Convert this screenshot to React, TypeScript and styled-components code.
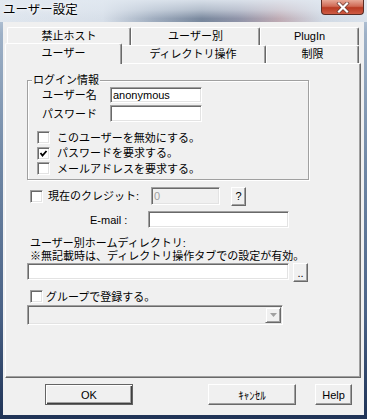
import React from 'react';
import styled, { createGlobalStyle, css } from 'styled-components';

const FONT = `"Liberation Sans", "Noto Sans CJK JP", sans-serif`;

const GlobalStyle = createGlobalStyle`
  html, body {
    margin: 0;
    padding: 0;
  }
  body {
    font-family: ${FONT};
    font-size: 11px;
    color: #000;
  }
`;

const Window = styled.div`
  width: 367px;
  height: 419px;
  box-sizing: border-box;
  display: flex;
  flex-direction: column;
  padding: 0 3px 4px 3px;
  overflow: hidden;
  background: linear-gradient(180deg, #c9d6e4 0%, #9eb1c7 8%, #6f87a5 40%, #4a6286 75%, #1f3356 100%);
`;

const TitleBar = styled.div`
  height: 22px;
  margin: 0 -3px;
  padding: 0 3px;
  display: flex;
  justify-content: space-between;
  align-items: flex-start;
  background:
    linear-gradient(180deg, rgba(226, 233, 241, 0.9) 0%, rgba(226, 233, 241, 0.6) 45%, rgba(226, 233, 241, 0.1) 85%),
    linear-gradient(90deg, #dfe6ee 0%, #d6dee8 28%, #98a6b9 42%, #6c7c93 55%, #868aa0 65%, #bba4ad 76%, #cfd8e3 88%, #d8e1eb 100%);
`;

const Title = styled.div`
  font-family: ${FONT};
  font-size: 12.5px;
  line-height: 20px;
  color: #000;
  text-shadow: 0 0 6px #fff, 0 0 3px #fff;
`;

const CloseButton = styled.div`
  width: 43px;
  height: 15px;
  box-sizing: border-box;
  border: 1px solid #5b2c24;
  border-top: none;
  border-radius: 0 0 4px 4px;
  background: linear-gradient(180deg, #e7a896 0%, #d06a55 45%, #b93a22 55%, #cf5c45 100%);
  display: flex;
  align-items: center;
  justify-content: center;
`;

const Client = styled.div`
  flex: 1;
  background: #f0f0f0;
  display: flex;
  flex-direction: column;
  padding: 5px 3px 0 2px;
`;

const TabControl = styled.div`
  width: 356px;
  display: flex;
  flex-direction: column;
`;

const TabRow = styled.div`
  display: flex;
  height: 18px;
  padding-left: 2px;
`;

const Tab = styled.div<{ $w: number; $active?: boolean }>`
  box-sizing: border-box;
  width: ${(p) => p.$w}px;
  height: 18px;
  border: 1px solid #fff;
  border-right-color: #696969;
  border-bottom: none;
  border-radius: 2px 2px 0 0;
  box-shadow: inset -1px 0 0 #a0a0a0;
  background: #f0f0f0;
  text-align: center;
  line-height: 16px;
  font-family: ${FONT};
  font-size: 11px;
  white-space: nowrap;
  ${(p) =>
    p.$active &&
    css`
      position: relative;
      z-index: 1;
      height: 21px;
      margin: -2px -2px -1px -2px;
      line-height: 18px;
    `}
`;

const Panel = styled.div`
  box-sizing: border-box;
  height: 315px;
  border: 1px solid #fff;
  border-right-color: #696969;
  border-bottom-color: #696969;
  box-shadow: inset -1px -1px 0 #a0a0a0;
  padding: 16px 0 0 21px;
  display: flex;
  flex-direction: column;
  align-items: flex-start;
`;

const GroupBox = styled.div`
  position: relative;
  box-sizing: border-box;
  width: 282px;
  height: 100px;
  border: 1px solid #a0a0a0;
  box-shadow: inset 1px 1px 0 #fff, 1px 1px 0 #fff;
  padding: 6px 0 0 9px;
  display: flex;
  flex-direction: column;
`;

const Legend = styled.span`
  position: absolute;
  top: -8px;
  left: 4px;
  padding: 0 1px;
  background: #f0f0f0;
  line-height: 14px;
`;

const FieldRow = styled.div<{ $gap?: number }>`
  display: flex;
  align-items: center;
  padding-left: 5px;
  margin-top: ${(p) => p.$gap ?? 0}px;
`;

const FieldLabel = styled.span<{ $w: number; $pad?: number }>`
  width: ${(p) => p.$w}px;
  padding-left: ${(p) => p.$pad ?? 0}px;
  box-sizing: border-box;
  line-height: 14px;
  white-space: nowrap;
`;

const TextBox = styled.input<{ $w: number; $h?: number }>`
  box-sizing: border-box;
  width: ${(p) => p.$w}px;
  height: ${(p) => p.$h ?? 17}px;
  margin: 0;
  padding: 0 2px;
  border: 1px solid;
  border-color: #a0a0a0 #fff #fff #a0a0a0;
  box-shadow: inset 1px 1px 0 #696969, inset -1px -1px 0 #e3e3e3;
  background: #fff;
  font-family: ${FONT};
  font-size: 11px;
  color: #000;
  outline: none;
  &:disabled {
    background: #f0f0f0;
    color: #a0a0a0;
  }
`;

const CheckRow = styled.label<{ $h?: number; $gap?: number; $indent?: number; $top?: number }>`
  display: flex;
  align-items: center;
  height: ${(p) => p.$h ?? 15.5}px;
  gap: ${(p) => p.$gap ?? 7}px;
  margin-left: ${(p) => p.$indent ?? 0}px;
  margin-top: ${(p) => p.$top ?? 0}px;
  line-height: 14px;
  white-space: nowrap;
`;

const CheckBoxFrame = styled.span`
  box-sizing: border-box;
  width: 13px;
  height: 13px;
  flex: none;
  border: 1px solid;
  border-color: #a0a0a0 #fff #fff #a0a0a0;
  box-shadow: inset 1px 1px 0 #696969, inset -1px -1px 0 #e3e3e3;
  background: #fff;
  display: flex;
  align-items: center;
  justify-content: center;
`;

const CheckBox: React.FC<{ checked?: boolean }> = ({ checked }) => (
  <CheckBoxFrame>
    {checked && (
      <svg width="9" height="9" viewBox="0 0 9 9">
        <polyline points="1.5,4 3.5,6.5 7.5,2" fill="none" stroke="#000" strokeWidth="1.8" />
      </svg>
    )}
  </CheckBoxFrame>
);

const InlineRow = styled.div<{ $h: number; $top: number; $gap?: number }>`
  display: flex;
  align-items: center;
  height: ${(p) => p.$h}px;
  margin-top: ${(p) => p.$top}px;
  gap: ${(p) => p.$gap ?? 0}px;
`;

const SmallButton = styled.button<{ $w: number; $h: number; $left?: number }>`
  box-sizing: border-box;
  width: ${(p) => p.$w}px;
  height: ${(p) => p.$h}px;
  padding: 0;
  margin: 0 0 0 ${(p) => p.$left ?? 0}px;
  border: 1px solid;
  border-color: #fff #696969 #696969 #fff;
  box-shadow: inset -1px -1px 0 #a0a0a0;
  background: #f0f0f0;
  font-family: ${FONT};
  font-size: 11px;
  line-height: 12px;
  color: #000;
`;

const CreditLabel = styled.span`
  width: 105px;
  padding-left: 2px;
  box-sizing: border-box;
  white-space: nowrap;
`;

const NoteText = styled.div`
  margin-top: 9px;
  padding-left: 3px;
  display: flex;
  flex-direction: column;
`;

const NoteLine = styled.span`
  height: 13px;
  line-height: 13px;
  white-space: nowrap;
`;

const ComboBox = styled.div`
  box-sizing: border-box;
  width: 256px;
  height: 20px;
  margin-top: 2px;
  padding: 1px;
  border: 1px solid;
  border-color: #a0a0a0 #fff #fff #a0a0a0;
  box-shadow: inset 1px 1px 0 #696969, inset -1px -1px 0 #e3e3e3;
  background: #f0f0f0;
  display: flex;
  justify-content: flex-end;
  align-items: center;
`;

const ComboArrow = styled.div`
  box-sizing: border-box;
  width: 16px;
  height: 16px;
  border: 1px solid;
  border-color: #f0f0f0 #696969 #696969 #f0f0f0;
  box-shadow: inset 1px 1px 0 #fff, inset -1px -1px 0 #a0a0a0;
  display: flex;
  align-items: center;
  justify-content: center;
`;

const ButtonRow = styled.div`
  display: flex;
  align-items: center;
  margin-top: 6px;
  padding-left: 40px;
  height: 21px;
`;

const PushButton = styled.button<{ $w: number; $left: number; $default?: boolean }>`
  box-sizing: border-box;
  width: ${(p) => p.$w}px;
  height: 21px;
  margin: 0 0 0 ${(p) => p.$left}px;
  padding: 0;
  background: #f0f0f0;
  font-family: ${FONT};
  font-size: 11px;
  color: #000;
  border: 1px solid;
  border-color: #fff #696969 #696969 #fff;
  box-shadow: inset -1px -1px 0 #a0a0a0;
  ${(p) =>
    p.$default &&
    css`
      border-color: #646464;
      box-shadow: inset 1px 1px 0 #fff, inset -1px -1px 0 #404040, inset -2px -2px 0 #a0a0a0;
    `}
`;

export default function App() {
  return (
    <>
      <GlobalStyle />
      <Window>
        <TitleBar>
          <Title>ユーザー設定</Title>
          <CloseButton>
            <svg width="14" height="11" viewBox="0 0 14 11">
              <path d="M3 1.5 L11 9.5 M11 1.5 L3 9.5" stroke="#6a3a32" strokeWidth="3.6" strokeLinecap="square" />
              <path d="M3 1.5 L11 9.5 M11 1.5 L3 9.5" stroke="#fff" strokeWidth="2.2" strokeLinecap="square" />
            </svg>
          </CloseButton>
        </TitleBar>
        <Client>
          <TabControl>
            <TabRow>
              <Tab $w={124}>禁止ホスト</Tab>
              <Tab $w={129}>ユーザー別</Tab>
              <Tab $w={99}>PlugIn</Tab>
            </TabRow>
            <TabRow>
              <Tab $w={117} $active>ユーザー</Tab>
              <Tab $w={146}>ディレクトリ操作</Tab>
              <Tab $w={93}>制限</Tab>
            </TabRow>
            <Panel>
              <GroupBox>
                <Legend>ログイン情報</Legend>
                <FieldRow>
                  <FieldLabel $w={68}>ユーザー名</FieldLabel>
                  <TextBox $w={92} $h={16} defaultValue="anonymous" />
                </FieldRow>
                <FieldRow $gap={2}>
                  <FieldLabel $w={68}>パスワード</FieldLabel>
                  <TextBox $w={92} type="password" />
                </FieldRow>
                <CheckRow $top={8}>
                  <CheckBox />
                  このユーザーを無効にする。
                </CheckRow>
                <CheckRow>
                  <CheckBox checked />
                  パスワードを要求する。
                </CheckRow>
                <CheckRow>
                  <CheckBox />
                  メールアドレスを要求する。
                </CheckRow>
              </GroupBox>

              <InlineRow $h={20} $top={6}>
                <CheckRow $h={20} $gap={3} $indent={3}>
                  <CheckBox />
                  <CreditLabel>現在のクレジット:</CreditLabel>
                </CheckRow>
                <TextBox $w={69} $h={18} defaultValue="0" disabled />
                <SmallButton $w={15} $h={19} $left={11}>?</SmallButton>
              </InlineRow>

              <InlineRow $h={17} $top={5}>
                <FieldLabel $w={121} $pad={63}>E-mail :</FieldLabel>
                <TextBox $w={141} />
              </InlineRow>

              <NoteText>
                <NoteLine>ユーザー別ホームディレクトリ:</NoteLine>
                <NoteLine>※無記載時は、ディレクトリ操作タブでの設定が有効。</NoteLine>
              </NoteText>

              <InlineRow $h={19} $top={0} $gap={4}>
                <TextBox $w={262} style={{ alignSelf: 'flex-start' }} />
                <SmallButton $w={15} $h={19}>..</SmallButton>
              </InlineRow>

              <CheckRow $h={13} $gap={3} $indent={3} $top={8}>
                <CheckBox />
                グループで登録する。
              </CheckRow>

              <ComboBox>
                <ComboArrow>
                  <svg width="7" height="4" viewBox="0 0 7 4">
                    <polygon points="0,0 7,0 3.5,4" fill="#a0a0a0" />
                  </svg>
                </ComboArrow>
              </ComboBox>
            </Panel>
          </TabControl>

          <ButtonRow>
            <PushButton $w={88} $left={0} $default>OK</PushButton>
            <PushButton $w={88} $left={75}>ｷｬﾝｾﾙ</PushButton>
            <PushButton $w={37} $left={19}>Help</PushButton>
          </ButtonRow>
        </Client>
      </Window>
    </>
  );
}
